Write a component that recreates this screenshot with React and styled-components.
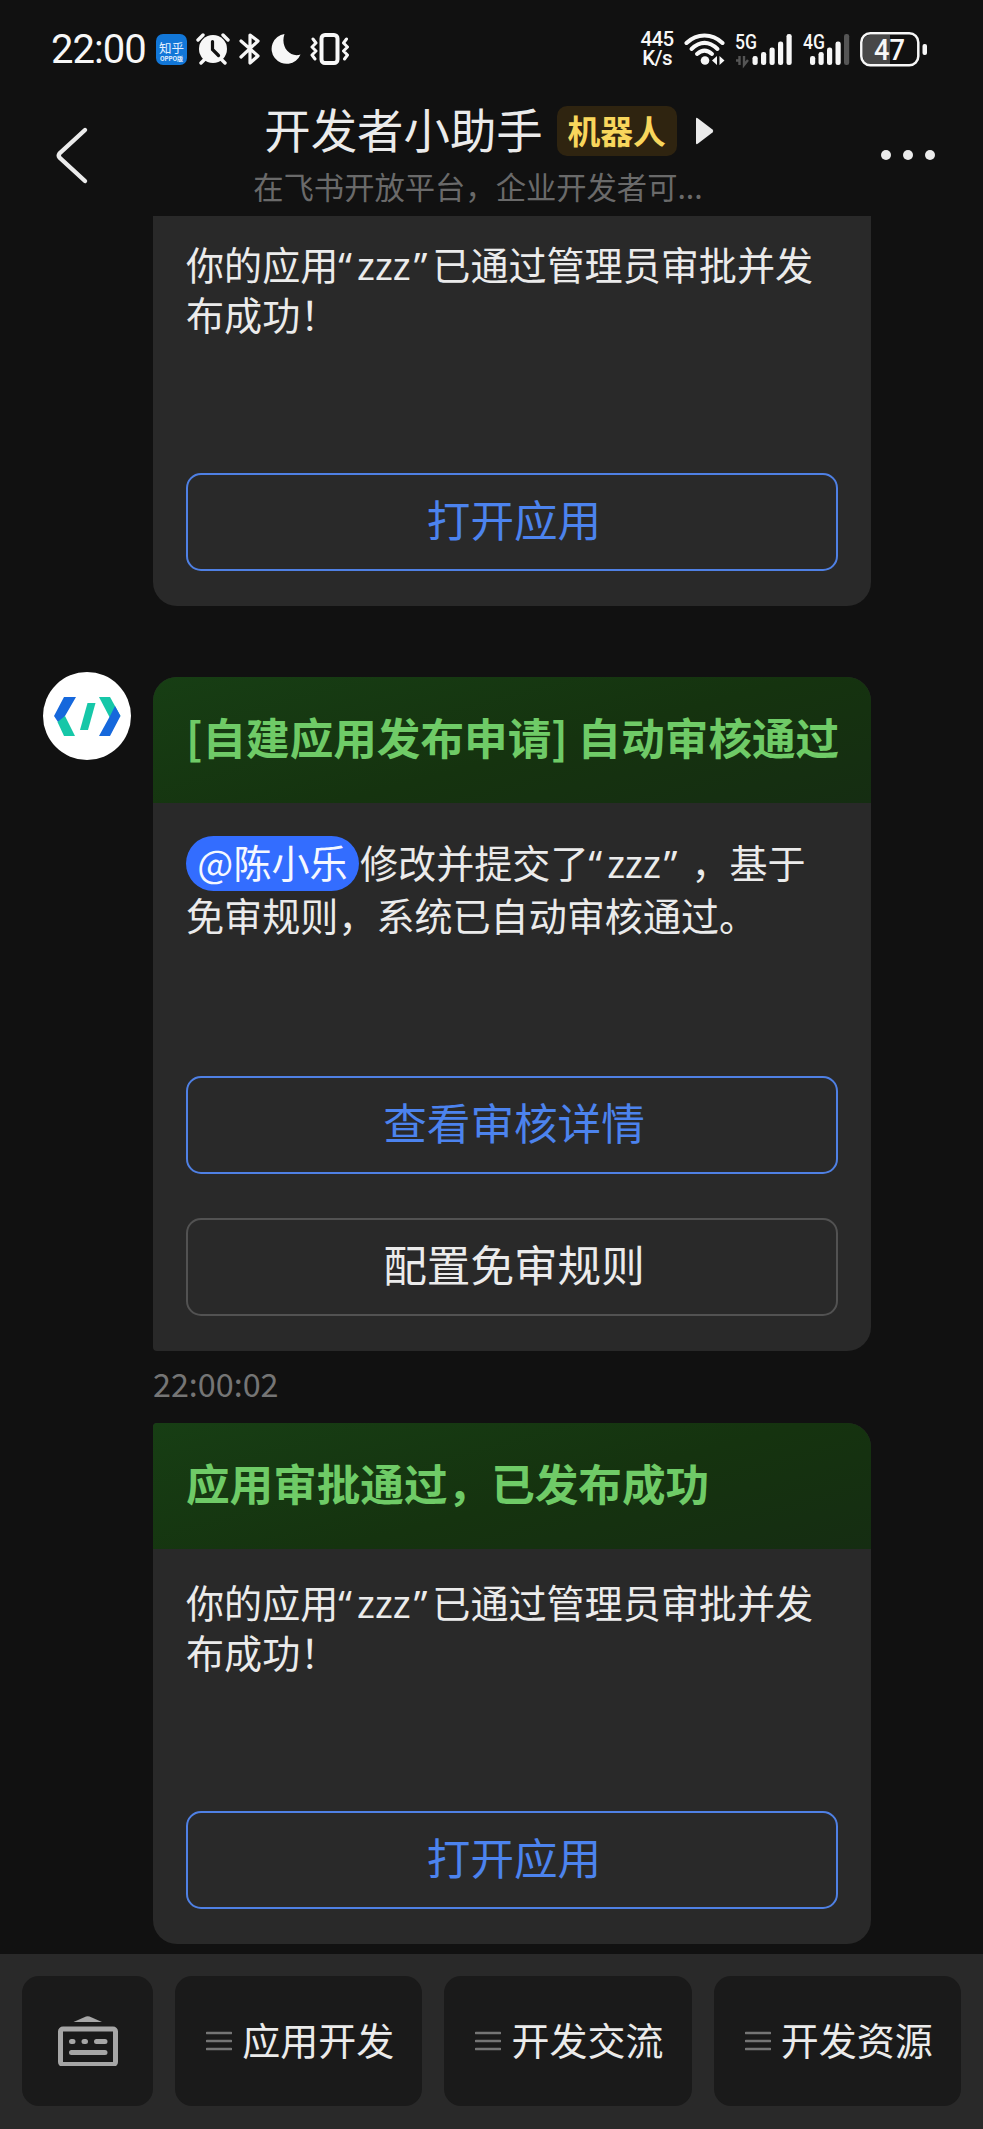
import styled, { createGlobalStyle } from "styled-components";

const GlobalStyle = createGlobalStyle`
    * {
        box-sizing: border-box;
    }

    body {
        margin: 0;
        background-color: #111111;
        color: #ebebeb;
        font-family: "Noto Sans CJK SC", "Noto Sans", sans-serif;
    }
`;

const Screen = styled.div`
    width: 983px;
    height: 2129px;
    display: flex;
    flex-direction: column;
    overflow: hidden;
    background-color: #111111;
`;

const StatusBar = styled.div`
    height: 92px;
    padding: 6px 56px 0 51px;
    display: flex;
    align-items: center;
    justify-content: space-between;
    flex-shrink: 0;
    color: #f7f7f7;
`;

const StatusGroup = styled.div`
    display: flex;
    align-items: center;
`;

const Clock = styled.span`
    width: 105px;
    padding-top: 2px;
    font-family: Roboto, sans-serif;
    font-size: 40px;
    letter-spacing: -1px;
    line-height: 1;
`;

const ZhihuBadge = styled.div`
    width: 31px;
    height: 31px;
    margin-right: 9px;
    padding-top: 6px;
    border-radius: 7px;
    background-color: #1277d8;
    color: #e4f1ff;
    text-align: center;
    font-size: 12.5px;
    line-height: 15px;

    & > small {
        display: block;
        font-size: 6px;
        font-weight: 700;
        line-height: 8px;
    }
`;

const NetSpeed = styled.div`
    width: 36px;
    margin-right: 9px;
    font-family: Roboto, sans-serif;
    font-size: 20.5px;
    font-weight: 500;
    letter-spacing: -0.6px;
    line-height: 19px;
    text-align: center;
`;

const NavBar = styled.header`
    height: 124px;
    padding: 0 48px 0 51px;
    display: grid;
    grid-template-columns: 100px 1fr 100px;
    flex-shrink: 0;
`;

const BackButton = styled.div`
    padding-top: 33px;
`;

const MoreButton = styled.div`
    padding-top: 58px;
    display: flex;
    justify-content: flex-end;
    gap: 12px;
`;

const Dot = styled.i`
    width: 10px;
    height: 10px;
    border-radius: 50%;
    background-color: #ebebeb;
`;

const TitleBlock = styled.div`
    padding-right: 8px;
    display: flex;
    flex-direction: column;
    align-items: center;
`;

const TitleRow = styled.div`
    height: 78px;
    display: flex;
    align-items: center;
`;

const Title = styled.h1`
    margin: 0 14px 0 0;
    padding-bottom: 6px;
    font-size: 46.4px;
    font-weight: 400;
    line-height: 60px;
`;

const BotTag = styled.span`
    width: 120px;
    height: 50px;
    margin-right: 19px;
    border-radius: 10px;
    background-color: #2f2410;
    color: #f8d65c;
    font-size: 32.8px;
    font-weight: 700;
    line-height: 47px;
    text-align: center;
`;

const Subtitle = styled.p`
    margin: -2px 22px 0 0;
    color: #6a6a6a;
    font-size: 30.3px;
    line-height: 36px;
    white-space: nowrap;
`;

const Chat = styled.main`
    flex: 1;
    min-height: 0;
    padding: 0 112px 0 43px;
    overflow: hidden;
`;

const Message = styled.div`
    margin-top: ${(p) => p.$gap || 0}px;
    display: grid;
    grid-template-columns: 110px 1fr;
`;

const Avatar = styled.div`
    width: 88px;
    height: 88px;
    margin-top: -5px;
    border-radius: 50%;
    background-color: #ffffff;
`;

const Card = styled.section`
    grid-column: 2;
    height: ${(p) => p.$height}px;
    border-radius: ${(p) => p.$radius};
    display: flex;
    flex-direction: column;
    overflow: hidden;
    background-color: #292929;
`;

const CardHeader = styled.h2`
    height: 126px;
    margin: 0;
    padding: 0 33px 9px;
    display: flex;
    align-items: center;
    background: linear-gradient(165deg, #173e14 0%, #15330f 55%, #152d12 100%);
    color: #6fcb67;
    font-size: 43.6px;
    font-weight: 700;
    white-space: pre;
`;

const CardBody = styled.div`
    flex: 1;
    padding: ${(p) => p.$top}px 33px 35px;
    display: flex;
    flex-direction: column;
`;

const Text = styled.p`
    margin: 0 0 auto;
    font-size: 38.1px;
    line-height: ${(p) => p.$line || 50}px;
    white-space: nowrap;
`;

const Quoted = styled.span`
    display: inline-block;
    width: ${(p) => p.$width || 94}px;
    font-family: "Noto Sans", sans-serif;
    line-height: 1;

    & > span {
        padding: 0 3px 0 5px;
    }
`;

const Mention = styled.span`
    display: inline-block;
    width: 173px;
    height: 55px;
    margin: 0 1px -2px 0;
    border-radius: 28px;
    background-color: #336dff;
    color: #f5f8ff;
    line-height: 51px;
    text-align: center;
`;

const CardButton = styled.button`
    height: 98px;
    margin: 0 0 ${(p) => p.$below || 0}px;
    padding: 0 0 8px 4px;
    border: 2.5px solid ${(p) => (p.$primary ? "#4f80e4" : "#525252")};
    border-radius: 15px;
    background: transparent;
    color: ${(p) => (p.$primary ? "#4c83ee" : "#ebebeb")};
    font-family: inherit;
    font-size: 43.6px;
    flex-shrink: 0;
`;

const Time = styled.div`
    height: 72px;
    padding-left: 110px;
    color: #757575;
    font-size: 32.3px;
    line-height: 65px;
`;

const MenuBar = styled.footer`
    height: 175px;
    padding: 22px 22px 23px 22px;
    display: grid;
    grid-template-columns: 131px 1fr 1fr 1fr;
    gap: 22px;
    flex-shrink: 0;
    background-color: #292929;
`;

const MenuItem = styled.div`
    border-radius: 17px;
    display: flex;
    align-items: center;
    justify-content: center;
    gap: 10px;
    background-color: #1a1a1a;
`;

const MenuLabel = styled.span`
    padding-bottom: 4px;
    font-size: 38px;
    line-height: 50px;
`;

const AlarmIcon = () => (
    <svg width="34" height="32" viewBox="0 0 34 32" style={{ marginRight: 9 }}>
        <circle cx="17" cy="16" r="14" fill="#f7f7f7" />
        <path d="M2 7l5-5M32 7l-5-5M5 30l4-4M29 30l-4-4" stroke="#f7f7f7" strokeWidth="3.4" strokeLinecap="round" />
        <path d="M16.5 8.5v8l6 6" fill="none" stroke="#111" strokeWidth="3.2" strokeLinecap="round" />
    </svg>
);

const BluetoothIcon = () => (
    <svg width="22" height="32" viewBox="0 0 22 32" style={{ marginRight: 10 }}>
        <path d="M2 8l17 15-8 7V2l8 6L2 24" fill="none" stroke="#f7f7f7" strokeWidth="3.2" strokeLinejoin="round" strokeLinecap="round" />
    </svg>
);

const MoonIcon = () => (
    <svg width="30" height="32" viewBox="0 0 30 32" style={{ marginRight: 9 }}>
        <path d="M13.5 1A15 15 0 1 0 29.5 21.5C19 25 9 14 13.5 1Z" fill="#f7f7f7" />
    </svg>
);

const VibrateIcon = () => (
    <svg width="40" height="32" viewBox="0 0 40 32">
        <rect x="11.5" y="2" width="16" height="28" rx="3.5" fill="none" stroke="#f7f7f7" strokeWidth="4" />
        <path d="M3 6l3 4-4 4 4 4-4 4 3 4M36.5 6l-3 4 4 4-4 4 4 4-3 4" fill="none" stroke="#f7f7f7" strokeWidth="3" strokeLinejoin="round" strokeLinecap="round" />
    </svg>
);

const WifiIcon = () => (
    <svg width="42" height="34" viewBox="0 0 42 34" style={{ marginRight: 9 }}>
        <g fill="none" stroke="#f7f7f7" strokeWidth="4" strokeLinecap="round">
            <path d="M2.5 11C13 1 28 1 38.5 11" />
            <path d="M7.5 17C16 9 25 9 33.5 17" />
            <path d="M13 22C18 17.5 23 17.5 28 22" />
        </g>
        <circle cx="21" cy="28.5" r="4.3" fill="#f7f7f7" />
        <path d="M33 24v9l-5-4.5zM35.5 24v9l5-4.5z" fill="#f7f7f7" />
    </svg>
);

const SignalLabel = styled.text`
    font-family: Roboto, sans-serif;
    font-size: 20.5px;
    font-weight: 500;
    fill: #f7f7f7;
`;

// heights of the five bars, left to right
const BARS = [9, 13, 17.5, 23.5, 31];

const Signal5G = () => (
    <svg width="58" height="44" viewBox="0 -5 58 44" style={{ marginRight: 10 }}>
        <SignalLabel x="0" y="16.5" textLength="22" lengthAdjust="spacingAndGlyphs">5G</SignalLabel>
        <path d="M1 28.5h3.5V24M4.5 24v9M9 24v9l4-5" fill="none" stroke="#555" strokeWidth="2.4" />
        {BARS.map((h, i) => (
            <rect key={h} x={17.5 + i * 8.5} y={33 - h} width="5.2" height={h} rx="2.3" fill="#f7f7f7" />
        ))}
    </svg>
);

const Signal4G = () => (
    <svg width="48" height="44" viewBox="0 -5 48 44" style={{ marginRight: 9 }}>
        <SignalLabel x="0" y="16.5" textLength="22" lengthAdjust="spacingAndGlyphs">4G</SignalLabel>
        {BARS.map((h, i) => (
            <rect key={h} x={7 + i * 8.5} y={33 - h} width="5.2" height={h} rx="2.3" fill={i === 4 ? "#555" : "#f7f7f7"} />
        ))}
    </svg>
);

const BatteryLabel = styled(SignalLabel)`
    font-size: 30px;
`;

const BatteryIcon = () => (
    <svg width="67" height="35" viewBox="0 0 67 35">
        <path d="M10 3h20v29H10a7 7 0 0 1-7-7V10a7 7 0 0 1 7-7Z" fill="#484848" />
        <rect x="1.3" y="1.3" width="57" height="32" rx="9" fill="none" stroke="#f7f7f7" strokeWidth="2.5" />
        <rect x="62.5" y="12" width="4.5" height="11" rx="2" fill="#f7f7f7" />
        <BatteryLabel x="14" y="28" textLength="31" lengthAdjust="spacingAndGlyphs">47</BatteryLabel>
    </svg>
);

const BackIcon = () => (
    <svg width="40" height="60" viewBox="0 0 40 60">
        <path d="M34 5L8.5 28.5Q7 30.5 8.5 32.5L34 56" fill="none" stroke="#ebebeb" strokeWidth="4.4" strokeLinecap="round" />
    </svg>
);

const PlayIcon = () => (
    <svg width="18" height="28" viewBox="0 0 18 28">
        <path d="M0 2Q0 0 2 1.5L16.5 12.5Q18 14 16.5 15.5L2 26.5Q0 28 0 26Z" fill="#ebebeb" />
    </svg>
);

const CodeLogo = () => (
    <svg width="88" height="88" viewBox="0 0 88 88">
        <path d="M21 25H33L22 44L17 53L11 44Z" fill="#1668dc" />
        <path d="M22 44L32 64H21L14.5 50Z" fill="#16c7a8" />
        <path d="M44.5 31H52.5L45 58H37Z" fill="#16c7a8" />
        <path d="M56 25H67L77.5 44L67 46Z" fill="#16c7a8" />
        <path d="M72 34L77.5 44L67 64H56L67 44Z" fill="#1668dc" />
    </svg>
);

const KeyboardIcon = () => (
    <svg width="62" height="50" viewBox="0 2 62 50">
        <path d="M16.5 8L29 2.5Q30.7 1.8 32.5 2.5L45 8Z" fill="#a6a6a6" />
        <rect x="3.5" y="15" width="55" height="35.500" rx="2.5" fill="none" stroke="#a6a6a6" strokeWidth="5" />
        <g stroke="#a6a6a6" strokeWidth="5" strokeLinecap="round">
            <path d="M14.5 27.5h1.5M27 27.5h1.5M39.5 27.5h8.5M14.5 38.5h33.5" />
        </g>
    </svg>
);

const MenuIcon = () => (
    <svg width="26" height="20" viewBox="0 0 26 20" style={{ marginLeft: 3 }}>
        <path d="M1 2h24M1 10h24M1 18h24" stroke="#757575" strokeWidth="2.6" strokeLinecap="round" />
    </svg>
);

const MENU = ["应用开发", "开发交流", "开发资源"];

const AppName = ({ width }) => (
    <Quoted $width={width}>
        “<span>zzz</span>”
    </Quoted>
);

const PublishedText = () => (
    <Text>
        你的应用<AppName />已通过管理员审批并发
        <br />
        布成功！
    </Text>
);

const App = () => {
    return (
        <Screen>
            <GlobalStyle />
            <StatusBar>
                <StatusGroup>
                    <Clock>22:00</Clock>
                    <ZhihuBadge>
                        知乎<small>OPPO版</small>
                    </ZhihuBadge>
                    <AlarmIcon />
                    <BluetoothIcon />
                    <MoonIcon />
                    <VibrateIcon />
                </StatusGroup>
                <StatusGroup>
                    <NetSpeed>
                        445
                        <br />
                        K/s
                    </NetSpeed>
                    <WifiIcon />
                    <Signal5G />
                    <Signal4G />
                    <BatteryIcon />
                </StatusGroup>
            </StatusBar>
            <NavBar>
                <BackButton>
                    <BackIcon />
                </BackButton>
                <TitleBlock>
                    <TitleRow>
                        <Title>开发者小助手</Title>
                        <BotTag>机器人</BotTag>
                        <PlayIcon />
                    </TitleRow>
                    <Subtitle>在飞书开放平台，企业开发者可...</Subtitle>
                </TitleBlock>
                <MoreButton>
                    <Dot />
                    <Dot />
                    <Dot />
                </MoreButton>
            </NavBar>
            <Chat>
                <Message>
                    <Card $height={390} $radius="0 0 24px 24px">
                        <CardBody $top={23}>
                            <PublishedText />
                            <CardButton $primary>打开应用</CardButton>
                        </CardBody>
                    </Card>
                </Message>
                <Message $gap={71}>
                    <Avatar>
                        <CodeLogo />
                    </Avatar>
                    <Card $height={674} $radius="24px 24px 24px 4px">
                        <CardHeader>[自建应用发布申请] 自动审核通过</CardHeader>
                        <CardBody $top={33}>
                            <Text $line={51}>
                                <Mention>@陈小乐</Mention>修改并提交了<AppName width={103} />，基于
                                <br />
                                免审规则，系统已自动审核通过。
                            </Text>
                            <CardButton $primary $below={44}>查看审核详情</CardButton>
                            <CardButton>配置免审规则</CardButton>
                        </CardBody>
                    </Card>
                </Message>
                <Time>22:00:02</Time>
                <Message>
                    <Card $height={521} $radius="4px 24px 24px 24px">
                        <CardHeader>应用审批通过，已发布成功</CardHeader>
                        <CardBody $top={28}>
                            <PublishedText />
                            <CardButton $primary>打开应用</CardButton>
                        </CardBody>
                    </Card>
                </Message>
            </Chat>
            <MenuBar>
                <MenuItem>
                    <KeyboardIcon />
                </MenuItem>
                {MENU.map((label) => (
                    <MenuItem key={label}>
                        <MenuIcon />
                        <MenuLabel>{label}</MenuLabel>
                    </MenuItem>
                ))}
            </MenuBar>
        </Screen>
    );
};

export default App;
